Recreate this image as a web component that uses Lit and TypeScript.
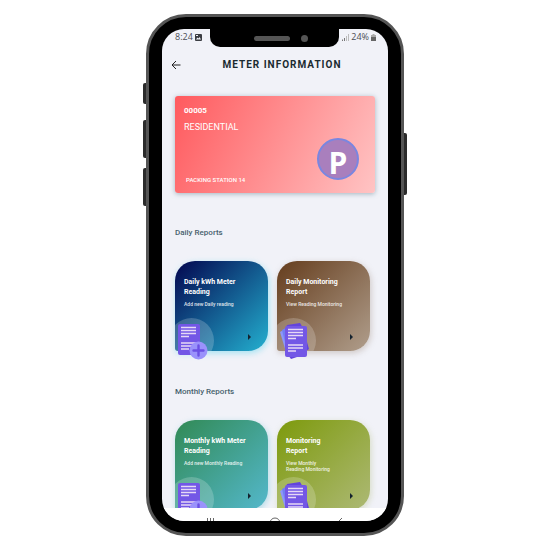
import { LitElement, html, css, svg } from "lit";
import { customElement, property } from "lit/decorators.js";

@customElement("report-card")
class ReportCard extends LitElement {
  @property() heading = "";
  @property() note = "";
  @property() tone = "navy";
  @property() icon = "add";

  static styles = css`
    :host { display: block; min-width: 0; }
    .card {
      position: relative; display: block; box-sizing: border-box; width: 100%; min-height: 90px;
      padding: 16px 8px 8px 9px; border: 0; border-radius: 20px 20px 20px 3px;
      color: #fff; text-align: left; text-decoration: none;
      font-family: Roboto, sans-serif;
    }
    .navy { background: linear-gradient(135deg, #03064f, #23b0d0); box-shadow: 1px 2px 6px #6fd8ee99; }
    .brown { background: linear-gradient(135deg, #653d1d, #b09e8c); box-shadow: 1px 2px 6px #9a877766; }
    .green { background: linear-gradient(135deg, #318a55, #54b8cc); box-shadow: 1px 2px 6px #54b8cc66; }
    .olive { background: linear-gradient(135deg, #7d9a0c, #adb975); box-shadow: 1px 2px 6px #adb97566; }
    h3 { margin: 0 0 4px; font-size: 7px; line-height: 10px; font-weight: 700; white-space: pre-line; }
    p { margin: 0; font-size: 5px; line-height: 6px; font-weight: 500; white-space: pre-line; color: #ffffffdd; }
    .clip { position: absolute; inset: 0; overflow: hidden; border-radius: inherit; }
    .halo { position: absolute; left: -6px; top: 57px; width: 45px; height: 45px; border-radius: 50%; background: #ffffff33; }
    .doc { position: absolute; left: 0; top: 60px; width: 40px; height: 40px; }
    .go { position: absolute; right: 17px; bottom: 11px; width: 4px; height: 6px; }
  `;

  render() {
    const lines = svg`<path d="M9 6.5h15M9 9.5h15M9 12.5h15M9 15.5h8M9 22h15M9 25h15M9 28h8" stroke="#e6d9f5" stroke-width="1.4"/>`;
    return html`<a class="card ${this.tone}" href="#">
      <span class="clip"><span class="halo"></span></span>
      <h3>${this.heading}</h3>
      <p>${this.note}</p>
      <svg class="doc" viewBox="0 0 40 40" aria-hidden="true">
        ${this.icon === "add"
          ? svg`<g transform="translate(-3 0)"><rect x="6" y="3" width="22" height="31" rx="2" fill="#7357e6"/>${lines}</g>
              <circle cx="23.5" cy="29.5" r="9" fill="#9a92fb"/>
              <path d="M23.5 24.5v10M18.5 29.5h10" stroke="#6a50e4" stroke-width="2.4" stroke-linecap="round"/>`
          : svg`<path d="M3 11l9-5v24l-3 1z" fill="#8c96fa"/>
              <path d="M5 9l9-5v24l-4 1z" fill="#7080f2"/>
              <path d="M9 7l1-3 13-2 3 5 6 21-3 2z" fill="#6244dc"/>
              <path d="M11 34l3 4 9-3z" fill="#6244dc"/>
              <g transform="translate(2 2)"><rect x="6" y="3" width="22" height="31" rx="2" fill="#7357e6"/>${lines}</g>`}
      </svg>
      <svg class="go" viewBox="0 0 4 6" aria-hidden="true"><path d="M1 0l3 3-3 3z" fill="#14222e"/></svg>
    </a>`;
  }
}

@customElement("app-root")
class AppRoot extends LitElement {
  static styles = css`
    :host { display: grid; place-items: center; min-height: 100vh; background: #fff; font-family: Roboto, sans-serif; }
    .phone {
      position: relative; box-sizing: border-box; width: 100%; max-width: 258px; aspect-ratio: 258 / 522;
      border: 3px solid #555; border-radius: 40px; padding: 12px 13px; background: #000; display: flex;
    }
    .key { position: absolute; left: -6px; width: 3px; height: 38px; border-radius: 2px 0 0 2px; background: #2b2b2b; }
    .mute { top: 66px; height: 21px; }
    .up { top: 103px; }
    .down { top: 151px; }
    .power { left: auto; right: -6px; top: 116px; height: 62px; border-radius: 0 2px 2px 0; }
    .screen { flex: 1; min-width: 0; display: flex; flex-direction: column; overflow: hidden; border-radius: 22px; background: #f1f2f8; }
    .status { display: flex; justify-content: space-between; align-items: flex-start; height: 18px; padding: 0 12px 0 13px; color: #4c4e55; font-family: "Open Sans", sans-serif; font-size: 9px; line-height: 16px; }
    .status span { display: flex; align-items: center; gap: 2px; }
    .notch {
      position: absolute; left: 50%; top: 10px; width: 129px; height: 20px; margin-left: -65px;
      border-radius: 0 0 10px 10px; background: #000;
      display: flex; justify-content: center; gap: 11px;
    }
    .speaker { width: 36px; height: 5px; margin: 9px 0 0 0; border-radius: 3px; background: #555; }
    .camera { width: 7px; height: 7px; margin: 8px 0 0; border-radius: 50%; background: #555; }
    .notch { box-sizing: border-box; padding-left: 12px; }
    header { display: flex; align-items: center; height: 36px; padding: 0 9px; }
    .back { padding: 0; border: 0; background: none; display: flex; color: #222; }
    h1 { margin: 0; flex: 1; padding-left: 4px; text-align: center; font-size: 10px; line-height: 16px; letter-spacing: 1px; font-weight: 700; color: #1b2b30; white-space: nowrap; }
    main { flex: 1; min-height: 0; overflow: hidden; padding: 13px 13px 0; }
    .meter {
      display: grid; grid-template-columns: 1fr auto; grid-template-rows: auto auto 1fr; min-height: 97px; box-sizing: border-box;
      padding: 8px 16px 8px 9px; border-radius: 3px; color: #fff;
      background: linear-gradient(115deg, #ff5a5e, #ffc4c4); box-shadow: 0 1px 5px #5f7d8c88;
    }
    .meter h2, .meter p { margin: 0; grid-column: 1; }
    .meter h2 { font-size: 8px; line-height: 14px; }
    .meter .kind { font-size: 9px; line-height: 18px; }
    .meter .place { align-self: end; padding-left: 2px; font-size: 6px; line-height: 10px; font-weight: 500; }
    .badge {
      grid-column: 2; grid-row: 1 / 4; align-self: end; margin-bottom: 5px; width: 42px; height: 42px; box-sizing: border-box;
      padding-top: 4px; border: 2px solid #7a86e0; border-radius: 50%; background: #a97fbd; text-align: center;
      font: 700 30px/38px "Open Sans", sans-serif;
    }
    .group { margin: 33px 0 0; font-size: 8px; line-height: 14px; font-weight: 500; color: #47616d; }
    .cards { display: grid; grid-template-columns: 1fr 1fr; gap: 9px; margin: 21px 5px 0 0; padding-bottom: 1px; }
    nav { height: 13px; background: #fff; display: flex; justify-content: space-around; align-items: flex-start; overflow: hidden; padding: 0 17px; }
    nav button { display: flex; padding: 0; border: 0; background: none; width: 14px; height: 14px; flex: none; color: #666; }
    svg { display: block; flex: none; }
  `;

  render() {
    return html`<div class="phone">
      <i class="key mute"></i><i class="key up"></i><i class="key down"></i><i class="key power"></i>
      <div class="screen">
        <div class="status">
          <span>8:24
            <svg width="7" height="7" viewBox="0 0 7 7"><rect width="7" height="7" rx="1" fill="#3b3d43"/><path d="M1 5.5l1.5-2 1 1 1-1.5 1.5 2.5zM1 1h2v1H1z" fill="#f1f2f8"/></svg></span>
          <span><svg width="7" height="7" viewBox="0 0 7 7"><path d="M.5 7V5.5M2.5 7V4" stroke="#777" /><path d="M4.5 7V2M6.5 7V0" stroke="#bbb"/></svg>24%<svg width="5" height="7" viewBox="0 0 5 7"><path d="M1.5 0h2v1H5v6H0V1h1.500z" fill="#aaa"/><path d="M0 3h5v4H0z" fill="#666"/></svg></span>
        </div>
        <header>
          <button class="back" aria-label="Back"><svg width="10" height="10" viewBox="0 0 10 10" fill="none" stroke="currentColor"><path d="M9.500 5H1M5 1L1 5l4 4"/></svg></button>
          <h1>METER INFORMATION</h1>
        </header>
        <main>
          <section class="meter">
            <h2>00005</h2>
            <p class="kind">RESIDENTIAL</p>
            <p class="place">PACKING STATION 14</p>
            <div class="badge">P</div>
          </section>
          <h2 class="group">Daily Reports</h2>
          <div class="cards">
            <report-card tone="navy" icon="add" heading=${"Daily kWh Meter\nReading"} note="Add new Daily reading"></report-card>
            <report-card tone="brown" icon="pages" heading=${"Daily Monitoring\nReport"} note="View Reading Monitoring"></report-card>
          </div>
          <h2 class="group">Monthly Reports</h2>
          <div class="cards">
            <report-card tone="green" icon="add" heading=${"Monthly kWh Meter\nReading"} note="Add new Monthly Reading"></report-card>
            <report-card tone="olive" icon="pages" heading=${"Monitoring\nReport"} note=${"View Monthly\nReading Monitoring"}></report-card>
          </div>
        </main>
        <nav>
          <button aria-label="Recent apps"><svg width="14" height="14" viewBox="0 0 14 14" stroke="currentColor"><path d="M3.500 10v4M6.500 10v4M9.500 10v4"/></svg></button>
          <button aria-label="Home"><svg width="14" height="14" viewBox="0 0 14 14" fill="none" stroke="currentColor"><circle cx="7" cy="15" r="5"/></svg></button>
          <button aria-label="Go back"><svg width="14" height="14" viewBox="0 0 14 14" fill="none" stroke="currentColor"><path d="M10 10l-4 4"/></svg></button>
        </nav>
      </div>
      <div class="notch"><i class="speaker"></i><i class="camera"></i></div>
    </div>`;
  }
}
